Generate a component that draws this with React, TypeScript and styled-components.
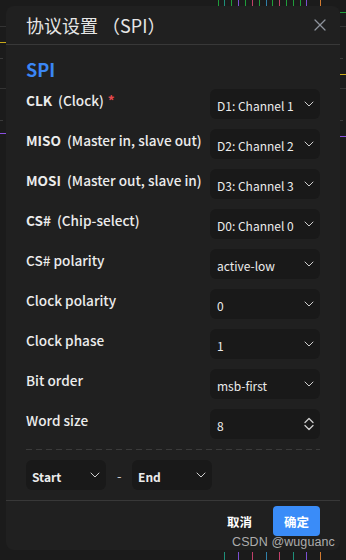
import React from "react";
import styled, { createGlobalStyle } from "styled-components";
import { ChevronDown, X } from "lucide-react";

const Global = createGlobalStyle`
  html, body { margin: 0; padding: 0; background: #1b1b1b; }
  body { font-family: "Noto Sans CJK SC", "Noto Sans", sans-serif; color: #e8e8e8; }
  * { box-sizing: border-box; }
`;

const Page = styled.div`
  position: relative;
  width: 346px;
  height: 560px;
  padding: 6px;
  overflow: hidden;
  background: #1b1b1b;
`;

const Trace = styled.div<{ $top: number; $left: number; $w: number; $h: number; $c: string; $dash?: boolean }>`
  position: absolute;
  top: ${(p) => p.$top}px;
  left: ${(p) => p.$left}px;
  width: ${(p) => p.$w}px;
  height: ${(p) => p.$h}px;
  background: ${(p) =>
    p.$dash
      ? `repeating-linear-gradient(90deg, ${p.$c} 0 3px, transparent 3px 6px)`
      : p.$c};
`;

const Dialog = styled.div`
  position: relative;
  z-index: 1;
  width: 334px;
  height: 544px;
  background: #202020;
  border-radius: 8px;
  display: flex;
  flex-direction: column;
`;

const Header = styled.div`
  height: 39px;
  border-bottom: 1px solid #383838;
  display: flex;
  align-items: center;
  justify-content: space-between;
  padding: 0 8px 0 20px;
`;

const Title = styled.h1`
  margin: 0;
  font-size: 18px;
  font-weight: 400;
  color: #e6e6e6;
  line-height: 24px;
  white-space: pre;
`;

const CloseButton = styled.button`
  width: 24px;
  height: 24px;
  border: 0;
  padding: 0;
  background: transparent;
  color: #8d939c;
  display: flex;
  align-items: center;
  justify-content: center;
`;

const Body = styled.div`
  padding: 12px 20px 10px;
  display: flex;
  flex-direction: column;
`;

const Section = styled.h2`
  margin: 0 0 8px;
  font-size: 18px;
  line-height: 24px;
  font-weight: 700;
  color: #3b86f4;
`;

const Form = styled.div`
  display: grid;
  grid-template-columns: minmax(0, 1fr) 110px;
  row-gap: 10px;
`;

const Label = styled.div`
  display: flex;
  align-items: baseline;
  gap: 6px;
  font-size: 13.6px;
  font-weight: 500;
  line-height: 22px;
  color: #ececec;
  white-space: nowrap;
`;

const Key = styled.span`
  font-weight: 700;
`;

const Required = styled.span`
  color: #e5484d;
  font-weight: 700;
  margin-left: -2px;
`;

const Select = styled.div<{ $w?: number; $bold?: boolean }>`
  width: ${(p) => (p.$w ? `${p.$w}px` : "100%")};
  height: 30px;
  background: #191919;
  border-radius: 6px;
  display: flex;
  align-items: center;
  justify-content: space-between;
  padding: 2px 3px 0 ${(p) => (p.$bold ? 6 : 7)}px;
  font-size: 12px;
  font-weight: ${(p) => (p.$bold ? 600 : 400)};
  color: #ececec;
  white-space: nowrap;
  svg { flex: none; color: #cfcfcf; margin-top: -2px; }
`;

const Divider = styled.div`
  height: 1px;
  margin: 10px 0;
  background: repeating-linear-gradient(90deg, #3b3b3b 0 6px, transparent 6px 10px);
`;

const Range = styled.div`
  display: flex;
  align-items: center;
  gap: 10px;
`;

const Dash = styled.span`
  width: 4px;
  font-size: 13px;
  color: #ccc;
  text-align: center;
  margin: 0 1px;
`;

const Footer = styled.div`
  flex: 1;
  border-top: 1px solid #383838;
  display: flex;
  justify-content: flex-end;
  align-items: flex-start;
  gap: 10px;
  padding: 5px 20px 0;
`;

const Button = styled.button<{ $primary?: boolean }>`
  height: 30px;
  padding: 0 11px;
  border: 0;
  border-radius: 4px;
  font-family: "Noto Sans CJK SC", sans-serif;
  font-size: 12.5px;
  font-weight: 600;
  color: #fff;
  background: ${(p) => (p.$primary ? "#3a8cf8" : "transparent")};
`;

const Watermark = styled.div`
  position: absolute;
  z-index: 2;
  left: 232px;
  top: 535px;
  font-family: "Liberation Sans", Arial, sans-serif;
  font-size: 12.5px;
  color: rgba(200, 200, 200, 0.85);
  letter-spacing: 0.1px;
`;

const Stepper = () => (
  <svg width="16" height="16" viewBox="0 0 16 16" fill="none" stroke="currentColor" strokeWidth="1.3" strokeLinecap="round" strokeLinejoin="round">
    <path d="M4 6.5 L8 2.5 L12 6.5" />
    <path d="M4 9.5 L8 13.5 L12 9.5" />
  </svg>
);

const Chevron = () => <ChevronDown size={16} strokeWidth={1.5} />;

type Row = { key?: string; desc: string; value: string; required?: boolean; stepper?: boolean };

const rows: Row[] = [
  { key: "CLK", desc: "(Clock)", value: "D1: Channel 1", required: true },
  { key: "MISO", desc: "(Master in, slave out)", value: "D2: Channel 2" },
  { key: "MOSI", desc: "(Master out, slave in)", value: "D3: Channel 3" },
  { key: "CS#", desc: "(Chip-select)", value: "D0: Channel 0" },
  { desc: "CS# polarity", value: "active-low" },
  { desc: "Clock polarity", value: "0" },
  { desc: "Clock phase", value: "1" },
  { desc: "Bit order", value: "msb-first" },
  { desc: "Word size", value: "8", stepper: true },
];

const topTicks: [number, string][] = [
  [218, "#1f9d3a"], [224, "#1e8f7a"], [231, "#1f9d3a"], [238, "#7a4fd0"], [245, "#1f9d3a"],
  [252, "#c0406a"], [259, "#1f9d3a"], [266, "#2f7fa8"], [272, "#1f9d3a"], [279, "#c0406a"],
  [286, "#1f9d3a"], [293, "#1f9d3a"], [300, "#1f9d3a"], [306, "#7a4fd0"], [320, "#d07a30"],
];
const bottomTicks: [number, string][] = [
  [224, "#1e8f7a"], [238, "#7a4fd0"], [252, "#c0406a"], [266, "#2f7fa8"], [279, "#c0406a"],
  [293, "#1e8f7a"], [306, "#7a4fd0"], [320, "#d07a30"],
];

export default function App() {
  return (
    <>
      <Global />
      <Page>
        {topTicks.map(([x, c]) => (
          <Trace key={`t${x}`} $top={0} $left={x} $w={1} $h={6} $c={c} />
        ))}
        {bottomTicks.map(([x, c]) => (
          <Trace key={`b${x}`} $top={552} $left={x} $w={1} $h={8} $c={c} />
        ))}
        <Trace $top={26} $left={0} $w={6} $h={1} $c="#333" />
        <Trace $top={42} $left={0} $w={6} $h={1} $c="#c8a818" />
        <Trace $top={58} $left={0} $w={6} $h={1} $c="#3a3a3a" $dash />
        <Trace $top={88} $left={0} $w={6} $h={1} $c="#333" />
        <Trace $top={120} $left={0} $w={6} $h={1} $c="#3a3a3a" $dash />
        <Trace $top={133} $left={0} $w={6} $h={1} $c="#8a4fe0" />
        <Trace $top={12} $left={340} $w={6} $h={1} $c="#1f9d3a" />
        <Trace $top={26} $left={340} $w={6} $h={1} $c="#333" />
        <Trace $top={58} $left={340} $w={6} $h={1} $c="#3a3a3a" $dash />
        <Trace $top={74} $left={340} $w={6} $h={1} $c="#c8a818" />
        <Trace $top={88} $left={340} $w={6} $h={1} $c="#333" />
        <Trace $top={120} $left={340} $w={6} $h={1} $c="#3a3a3a" $dash />
        <Trace $top={136} $left={340} $w={6} $h={1} $c="#8a4fe0" />
        <Dialog>
          <Header>
            <Title>协议设置 （SPI）</Title>
            <CloseButton aria-label="close">
              <X size={20} strokeWidth={1.5} />
            </CloseButton>
          </Header>
          <Body>
            <Section>SPI</Section>
            <Form>
              {rows.map((r) => (
                <React.Fragment key={r.desc}>
                  <Label>
                    {r.key && <Key>{r.key}</Key>}
                    <span>{r.desc}</span>
                    {r.required && <Required>*</Required>}
                  </Label>
                  <Select>
                    <span>{r.value}</span>
                    {r.stepper ? <Stepper /> : <Chevron />}
                  </Select>
                </React.Fragment>
              ))}
            </Form>
            <Divider />
            <Range>
              <Select $w={80} $bold>
                <span>Start</span>
                <Chevron />
              </Select>
              <Dash>-</Dash>
              <Select $w={80} $bold>
                <span>End</span>
                <Chevron />
              </Select>
            </Range>
          </Body>
          <Footer>
            <Button>取消</Button>
            <Button $primary>确定</Button>
          </Footer>
        </Dialog>
        <Watermark>CSDN @wuguanc</Watermark>
      </Page>
    </>
  );
}
